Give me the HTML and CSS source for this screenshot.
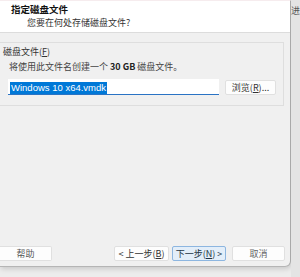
FILE: index.html
```html
<!DOCTYPE html>
<html lang="zh-CN">
<head>
  <meta charset="UTF-8" />
  <title>新建虚拟机向导</title>
  <link rel="stylesheet" href="styles.css">
</head>
<body>
  <div class="screen">
    <div class="wizard">
      <header class="wizard-head">
        <div class="head-title">指定磁盘文件</div>
        <div class="head-sub">您要在何处存储磁盘文件?</div>
      </header>
      <main class="wizard-body">
        <section class="group">
          <div class="group-label">磁盘文件(<u>F</u>)</div>
          <p class="group-desc">将使用此文件名创建一个 <b>30 GB</b> 磁盘文件。</p>
          <div class="file-row">
            <div class="file-input"><span class="sel">Windows 10 x64.vmdk</span></div>
            <button class="btn browse">浏览(<u>R</u>)...</button>
          </div>
        </section>
      </main>
      <footer class="wizard-foot">
        <button class="btn help">帮助</button>
        <div class="nav">
          <button class="btn back">&lt; 上一步(<u>B</u>)</button>
          <button class="btn primary">下一步(<u>N</u>) &gt;</button>
          <button class="btn cancel">取消</button>
        </div>
      </footer>
    </div>
    <div class="behind"><span>进</span></div>
  </div>
</body>
</html>
```

FILE: styles.css
```css
* { margin:0; padding:0; box-sizing:border-box; }
body { font-family:"Noto Sans CJK SC","Liberation Sans",sans-serif; font-size:9px; color:#222; background:#ececec; width:300px; height:277px; overflow:hidden; }
.screen { display:flex; height:277px; }
.wizard { width:292px; height:267px; background:#f0f0f0; border-right:1px solid #a9a9a9; border-bottom:1px solid #b5b5b5; border-bottom-right-radius:6px; box-shadow:1px 2px 5px rgba(0,0,0,0.15); display:flex; flex-direction:column; border-top:1px solid #f6ecee; }
.behind { flex:1; background:#e4e4e4; padding-top:4px; color:#555; font-size:9px; text-align:center; }
.wizard-head { background:#fff; height:32px; border-bottom:1px solid #dcdcdc; padding:2px 0 0 11px; }
.head-title { font-weight:bold; line-height:13px; color:#111; font-size:9.5px; }
.head-sub { padding-left:16px; line-height:12px; margin-top:1px; color:#333; }
.wizard-body { flex:1; padding:9px 6px 0 0; }
.group { border:1px solid #dedede; border-left:none; height:64px; padding:3px 0 0 3px; }
.group-label { line-height:11px; color:#333; }
.group-label u, .btn u { text-decoration:underline; }
.group-desc { margin:4px 0 0 6px; line-height:11px; color:#444; }
.group-desc b { font-weight:bold; color:#222; }
.file-row { display:flex; align-items:center; margin:7px 0 0 5px; gap:6px; }
.file-input { width:211px; height:16px; background:#fff; border-bottom:1px solid #2a73c4; padding:2px 0 0 2px; }
.sel { display:inline-block; background:#0078d7; color:#fff; line-height:12px; padding:0 1px; font-family:"Liberation Sans",sans-serif; font-size:9.5px; }
.btn { font-family:inherit; font-size:9px; color:#333; background:#fdfdfd; border:1px solid #e0e0e0; border-radius:2px; height:15px; line-height:13px; }
.browse { width:51px; }
.wizard-foot { display:flex; justify-content:space-between; align-items:center; height:26px; padding:0 5px 0 0; }
.help { width:52px; border-left:none; border-radius:0 2px 2px 0; color:#555; }
.nav { display:flex; }
.back { width:55px; margin-right:3px; }
.primary { width:54px; background:#e3eef9; border-color:#8db6e0; color:#234; margin-right:6px; }
.cancel { width:53px; color:#666; }
```
